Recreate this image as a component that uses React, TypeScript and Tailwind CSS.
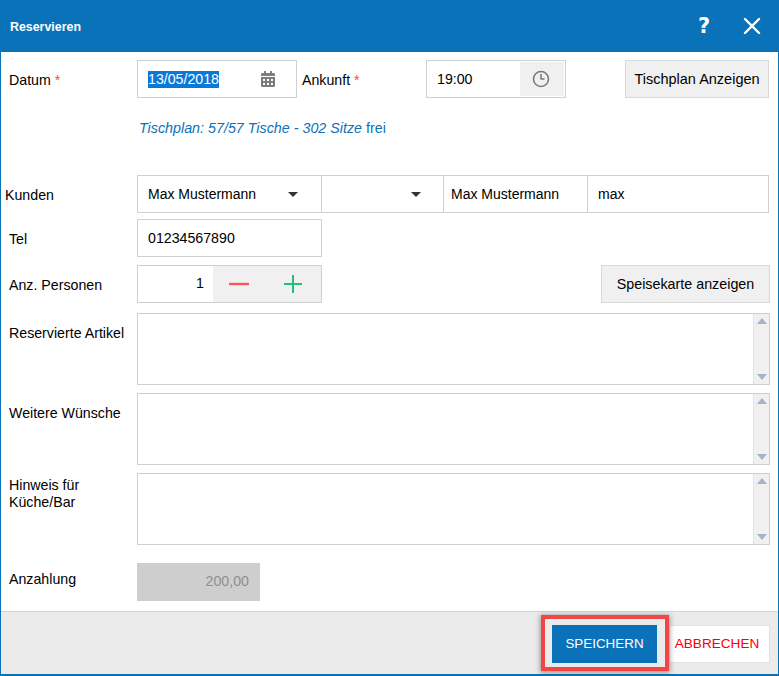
import React from "react";
import { Clock3, X } from "lucide-react";
import { FaCalendarAlt } from "react-icons/fa";

function Caret() {
  return <span className="block w-0 h-0 border-x-[5px] border-x-transparent border-t-[5px] border-t-[#333]" />;
}

function ScrollArea({ label, className, labelTop }: { label: React.ReactNode; className?: string; labelTop: string }) {
  return (
    <div className={"flex h-[72px] " + (className ?? "")}>
      <div className={"w-[136px] pl-[8px] leading-[17px] text-[14.2px] " + labelTop}>{label}</div>
      <div className="flex w-[633px] border border-[#d0d0d0]">
        <div className="flex-1" />
        <div className="w-[16px] bg-[#f0f0f0] border-l border-[#e4e4e4] flex flex-col items-center justify-between py-[4px]">
          <span className="w-0 h-0 border-x-[5px] border-x-transparent border-b-[6px] border-b-[#a8b1cc]" />
          <span className="w-0 h-0 border-x-[5px] border-x-transparent border-t-[6px] border-t-[#a8b1cc]" />
        </div>
      </div>
    </div>
  );
}

export default function App() {
  return (
    <div className="w-[779px] h-[676px] flex flex-col bg-white border border-[#0a72b9] border-t-0 text-[14.2px] text-black font-['Liberation_Sans',Arial,sans-serif] overflow-hidden">
      {/* Kopfzeile */}
      <div className="h-[52px] shrink-0 -mx-px bg-[#0a72b9] flex items-center pl-[10px] text-white">
        <span className="text-[12.4px] font-bold mt-[2px]">Reservieren</span>
        <span className="ml-auto text-[21px] font-bold leading-none w-[20px] text-center mr-[24px] font-['DejaVu_Sans',sans-serif]">?</span>
        <X className="mr-[13px]" size={28} strokeWidth={2.1} />
      </div>

      {/* Datum / Ankunft */}
      <div className="flex h-[38px] mt-[8px]">
        <div className="w-[136px] pl-[8px] pt-[10px]">
          Datum <span className="text-[#f44]">*</span>
        </div>
        <div className="w-[160px] border border-[#d0d0d0] flex items-center pl-[10px] pr-[20px]">
          <span className="bg-[#0a78d7] text-white leading-[17px]">13/05/2018</span>
          <FaCalendarAlt className="ml-auto text-[#7d7d7d]" size={16} />
        </div>
        <div className="w-[124px] pl-[5px] pt-[10px] mr-[5px]">
          Ankunft <span className="text-[#f44]">*</span>
        </div>
        <div className="w-[140px] border border-[#d0d0d0] flex items-center">
          <span className="pl-[10px] pt-px flex-1">19:00</span>
          <div className="w-[44px] h-[34px] mr-px bg-[#f0f0f0] flex items-center justify-center pr-[2px]">
            <Clock3 className="text-[#7a7a7a]" size={18} strokeWidth={2.1} />
          </div>
        </div>
        <button className="ml-[59px] w-[144px] pt-px bg-[#f0f0f0] border border-[#d8d8d8] text-center text-[14.5px]">Tischplan Anzeigen</button>
      </div>

      <div className="h-[18px] mt-[21px] pl-[138px] text-[14.3px] leading-[18px] text-[#0a72b9]">
        <i>Tischplan: 57/57 Tische - 302 Sitze</i> frei
      </div>

      {/* Kunden */}
      <div className="flex h-[38px] mt-[38px] text-[14px]">
        <div className="w-[136px] pl-[4px] pt-[10px] text-[14.2px]">Kunden</div>
        <div className="w-[632px] flex border border-[#d0d0d0]">
          <div className="w-[184px] flex items-center pl-[10px] pr-[23px] border-r border-[#d0d0d0]">
            Max Mustermann
            <span className="ml-auto"><Caret /></span>
          </div>
          <div className="w-[122px] flex items-center justify-end pr-[22px] border-r border-[#d0d0d0]">
            <Caret />
          </div>
          <div className="w-[144px] flex items-center pl-[7px] border-r border-[#d0d0d0]">Max Mustermann</div>
          <div className="flex-1 flex items-center pl-[10px]">max</div>
        </div>
      </div>

      {/* Tel */}
      <div className="flex h-[38px] mt-[6px]">
        <div className="w-[136px] pl-[8px] pt-[10px]">Tel</div>
        <div className="w-[185px] border border-[#d0d0d0] flex items-center pl-[10px] pt-px">01234567890</div>
      </div>

      {/* Anz. Personen */}
      <div className="flex h-[38px] mt-[8px]">
        <div className="w-[136px] pl-[8px] pt-[10px]">Anz. Personen</div>
        <div className="w-[185px] border border-[#d0d0d0] flex items-center">
          <span className="w-[75px] text-right pr-[9px]">1</span>
          <div className="flex-1 h-full bg-[#f0f0f0] flex items-center pl-[16px]">
            <svg width="20" height="20" viewBox="0 0 20 20" className="text-[#f5585c]">
              <path d="M0 10h20" stroke="currentColor" strokeWidth="2.4" />
            </svg>
            <svg width="18" height="18" viewBox="0 0 18 18" className="ml-[35px] text-[#25bd7c]">
              <path d="M0 9h18M9 0v18" stroke="currentColor" strokeWidth="2" />
            </svg>
          </div>
        </div>
        <button className="ml-[279px] w-[169px] pt-px bg-[#f0f0f0] border border-[#d8d8d8] text-center text-[14.3px]">Speisekarte anzeigen</button>
      </div>

      <ScrollArea className="mt-[10px]" labelTop="pt-[12px]" label="Reservierte Artikel" />
      <ScrollArea className="mt-[8px]" labelTop="pt-[12px]" label="Weitere Wünsche" />
      <ScrollArea className="mt-[8px]" labelTop="pt-[4px]" label={<>Hinweis für<br />Küche/Bar</>} />

      {/* Anzahlung */}
      <div className="flex h-[38px] mt-[18px]">
        <div className="w-[136px] pl-[8px] pt-[6px]">Anzahlung</div>
        <div className="w-[123px] bg-[#cecece] text-[#8f8f8f] flex items-center justify-end pr-[11px]">200,00</div>
      </div>

      {/* Fußzeile */}
      <div className="relative mt-[10px] flex-1 bg-[#ebebeb] border-t border-[#d4d4d4] border-b border-b-[#0a72b9] flex justify-end items-start pt-[13px] pr-[8px]">
        <button className="w-[105px] h-[38px] mr-[12px] bg-[#0a72b9] text-white text-[13.4px]">SPEICHERN</button>
        <button className="w-[101px] h-[38px] pr-[5px] bg-white border border-[#e2e2e2] text-[#f00] text-[13.6px]">ABBRECHEN</button>
        <div className="absolute left-[540px] top-[3px] w-[128px] h-[56px] border-[4px] border-[#f44545] shadow-[0_1px_5px_1px_rgba(0,0,0,0.35)]" />
      </div>
    </div>
  );
}
